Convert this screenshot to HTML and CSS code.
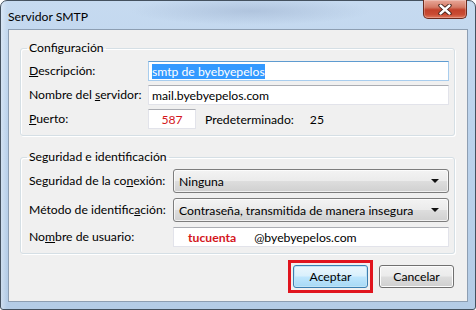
FILE: index.html
```html
<!DOCTYPE html>
<html>
<head>
    <title>Servidor SMTP</title>
    <link rel="stylesheet" href="styles.css">
</head>
<body>
<div class="window">
    <div class="titlebar">
        <span class="title">Servidor SMTP</span>
        <div class="close">
            <svg width="14" height="11" viewBox="0 0 14 11">
                <path d="M2.5 1.5 L11.5 9.5 M11.5 1.5 L2.5 9.5" stroke="#3a1a12" stroke-width="4.2" stroke-linecap="round"/>
                <path d="M2.5 1.5 L11.5 9.5 M11.5 1.5 L2.5 9.5" stroke="#ffffff" stroke-width="2.4" stroke-linecap="round"/>
            </svg>
        </div>
    </div>

    <div class="client">
        <fieldset class="group group-config">
            <legend>Configuración</legend>

            <label><u>D</u>escripción:</label>
            <div class="field focused"><span class="selected">smtp de byebyepelos</span></div>

            <label>Nombre del <u>s</u>ervidor:</label>
            <div class="field">mail.byebyepelos.com</div>

            <label><u>P</u>uerto:</label>
            <div class="port-row">
                <div class="field port">587</div>
                <span class="default-label">Predeterminado:</span>
                <span>25</span>
            </div>
        </fieldset>

        <fieldset class="group group-security">
            <legend>Seguridad e identificación</legend>

            <label>Seguridad de la co<u>n</u>exión:</label>
            <div class="combo">
                <span>Ninguna</span>
                <span class="arrow"></span>
            </div>

            <label>Método de identific<u>a</u>ción:</label>
            <div class="combo">
                <span>Contraseña, transmitida de manera insegura</span>
                <span class="arrow"></span>
            </div>

            <label>No<u>m</u>bre de usuario:</label>
            <div class="field user">
                <span class="account">tucuenta</span>
                <span>@byebyepelos.com</span>
            </div>
        </fieldset>

        <div class="buttons">
            <div class="mark">
                <div class="btn btn-default">Aceptar</div>
            </div>
            <div class="btn">Cancelar</div>
        </div>
    </div>
</div>
</body>
</html>
```

FILE: styles.css
```css
* {
    box-sizing: border-box;
}
body {
    margin: 0;
    font-family: Lato, "Noto Sans", sans-serif;
    font-size: 12.2px;
    color: #000;
}
.window {
    width: 476px;
    height: 310px;
    display: flex;
    flex-direction: column;
    padding: 0 7px 7px 7px;
    border: 1px solid #44515f;
    border-radius: 7px 7px 3px 3px;
    background:
        linear-gradient(90deg, rgba(255,255,255,0.35) 0px, rgba(255,255,255,0) 6px),
        radial-gradient(ellipse 120px 14px at 250px 10px, rgba(150,170,200,0.45), rgba(150,170,200,0)),
        linear-gradient(180deg, #c6daf0 0%, #bcd3ec 40%, #b4cce6 100%);
}
.titlebar {
    height: 28px;
    display: flex;
    justify-content: space-between;
    align-items: flex-start;
}
.title {
    margin-top: 8px;
    line-height: 16px;
}
.close {
    width: 44px;
    height: 19px;
    margin-top: -1px;
    margin-right: 1px;
    display: flex;
    align-items: center;
    justify-content: center;
    border: 1px solid #6b2a1e;
    border-top: none;
    border-radius: 0 0 5px 5px;
    background: linear-gradient(180deg, #e9a899 0%, #d47a66 40%, #c2412b 55%, #c94b33 80%, #e0795e 100%);
    box-shadow: inset 0 0 0 1px rgba(255,255,255,0.25);
}
.client {
    flex: 1;
    display: flex;
    flex-direction: column;
    border: 1px solid #8d9eb2;
    background-color: #f0f0f0;
    padding: 0 12px 0 11px;
}
.group {
    margin: 10px 0 0 0;
    padding: 5px 5px 6px 8px;
    border: 1px solid #d5dfe5;
    border-radius: 3px;
    box-shadow: inset 1px 1px 0 #fff, 1px 1px 0 #fff;
    display: grid;
    align-items: center;
    min-width: 0;
}
.group legend {
    padding: 0 2px;
    margin-left: -2px;
    line-height: 16px;
}
.group-config {
    grid-template-columns: 119px 1fr;
    grid-auto-rows: 20px;
    row-gap: 4px;
}
.group-security {
    margin-top: 13px;
    padding-top: 4px;
    grid-template-columns: 144px 1fr;
    grid-template-rows: 24px 24px 20px;
    row-gap: 5px;
}
label {
    line-height: 16px;
    white-space: nowrap;
}
.field {
    height: 20px;
    display: flex;
    align-items: center;
    padding: 0 3px;
    border: 1px solid #e2e3ea;
    border-top-color: #abadb3;
    background-color: #fff;
    white-space: nowrap;
}
.field.focused {
    border-color: #a8cdee;
    border-top-color: #5e9bd0;
}
.selected {
    background-color: #3399ff;
    color: #fff;
    line-height: 15px;
}
.port-row {
    display: flex;
    align-items: center;
    white-space: nowrap;
}
.field.port {
    width: 48px;
    justify-content: center;
    color: #d4161c;
}
.default-label {
    margin: 0 16px 0 9px;
}
.combo {
    height: 24px;
    display: flex;
    align-items: center;
    justify-content: space-between;
    padding: 0 9px 0 5px;
    border: 1px solid #7d7d7d;
    border-radius: 3px;
    background: linear-gradient(180deg, #f3f3f3 0%, #ebebeb 48%, #dddddd 52%, #d0d0d0 100%);
    box-shadow: inset 0 0 0 1px rgba(255,255,255,0.7);
    white-space: nowrap;
}
.arrow {
    width: 0;
    height: 0;
    border-left: 4px solid transparent;
    border-right: 4px solid transparent;
    border-top: 4px solid #111;
}
.field.user {
    padding-left: 14px;
}
.account {
    color: #d4161c;
    font-weight: bold;
    margin-right: 18px;
}
.buttons {
    margin-top: 6px;
    display: flex;
    justify-content: flex-end;
    align-items: center;
    gap: 6px;
    padding-right: 1px;
}
.mark {
    border: 3px solid #e0141e;
    padding: 2px;
}
.btn {
    width: 75px;
    height: 23px;
    display: flex;
    align-items: center;
    justify-content: center;
    border: 1px solid #707070;
    border-radius: 3px;
    background: linear-gradient(180deg, #f2f2f2 0%, #ebebeb 48%, #dddddd 52%, #cfcfcf 100%);
    box-shadow: inset 0 0 0 1px #fcfcfc;
}
.btn-default {
    border-color: #3c7fb1;
    background: linear-gradient(180deg, #eaf6fd 0%, #d9f0fc 48%, #bee6fd 52%, #a7d9f5 100%);
    box-shadow: inset 0 0 0 1px #c2e4f6;
}
```
